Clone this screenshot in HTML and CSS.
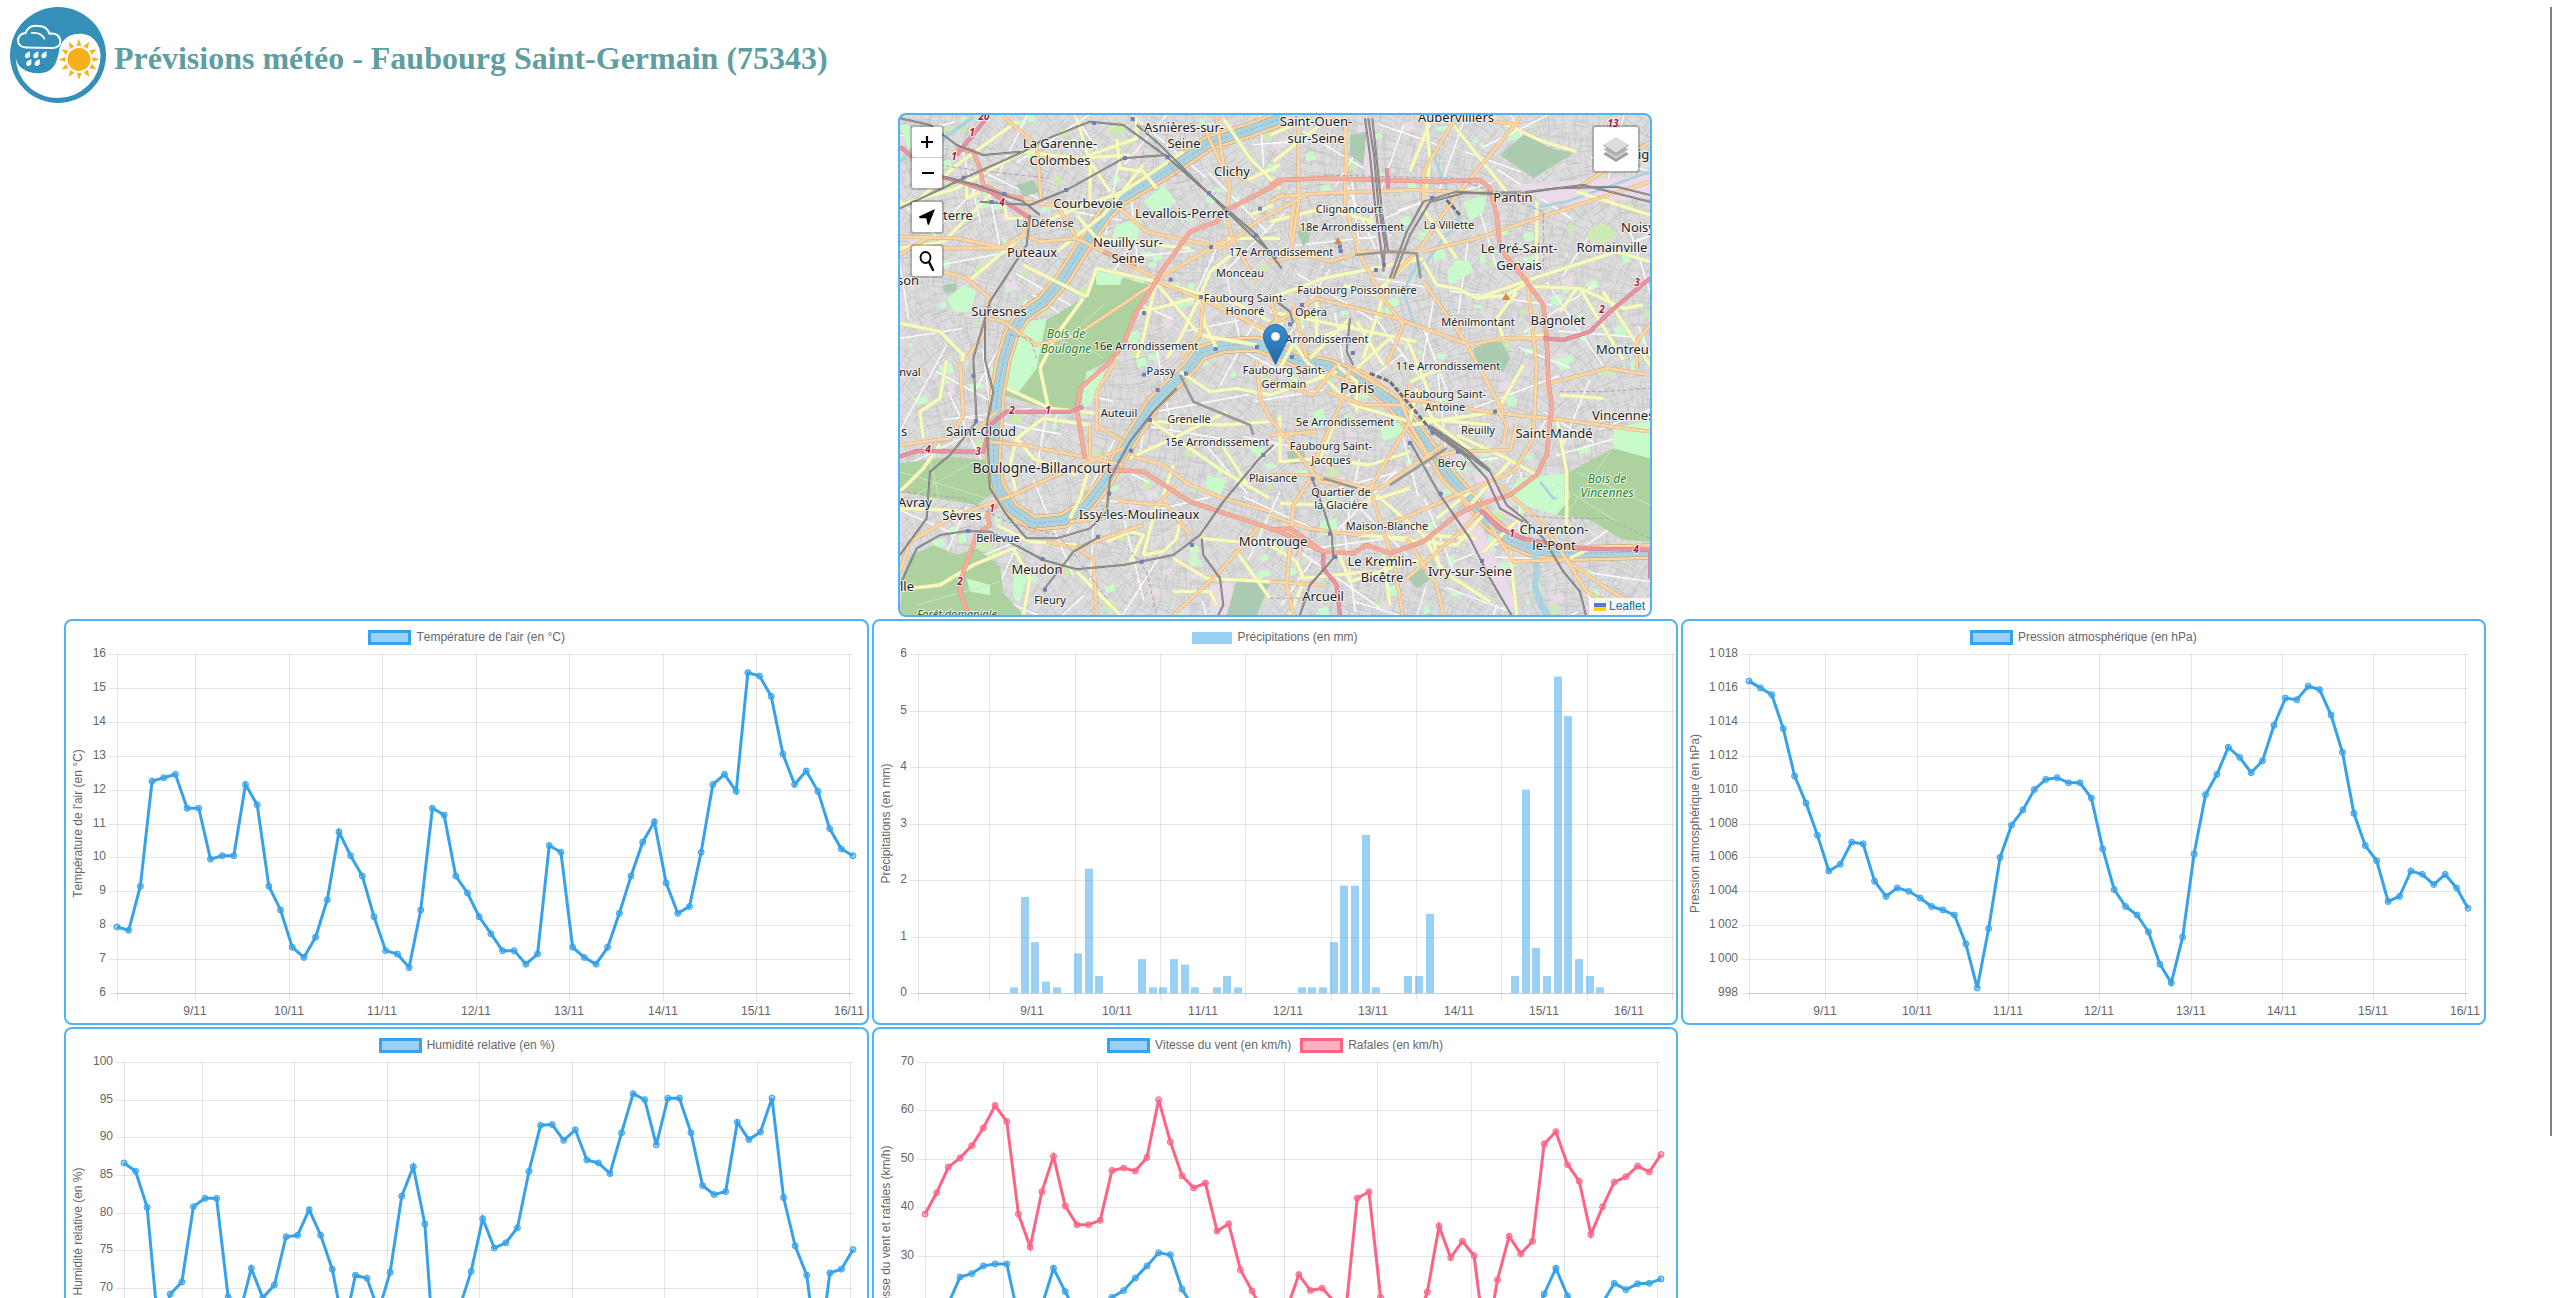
FILE: index.html
```html
<!DOCTYPE html>
<html lang="fr">
<head>
<meta charset="utf-8">
<meta name="viewport" content="width=device-width, initial-scale=1">
<title>Prévisions météo - Faubourg Saint-Germain (75343)</title>
<link rel="stylesheet" href="styles.css">
</head>
<body>
<header class="site-header">
  <svg class="logo" viewBox="20 17 284 284" role="img" aria-label="Logo météo">
    <circle cx="162" cy="159" r="142" fill="#3490b8"/>
    <path d="M37 164C38 192 66 213 103 213C146 212 157 187 164 152C170 116 190 96 227 96C264 96 286 125 288 159A126 126 0 0 1 162 286C92 286 38 232 37 164Z" fill="#fff"/>
    <path d="M68 137C36 137 36 96 66 94C72 78 86 70 103 73C122 72 132 82 137 96C156 93 168 103 169 118C170 130 160 138 147 138Z" fill="#3490b8" stroke="#fff" stroke-width="6"/>
    <path d="M84 94C103 91 116 100 122 111" fill="none" stroke="#fff" stroke-width="5" stroke-linecap="round"/>
    <g fill="#fff">
      <path id="drop" d="M79 148C68 153 62 158 64 164C67 171 77 169 79 162Z"/>
      <use href="#drop" x="25"/><use href="#drop" x="49"/><use href="#drop" x="4" y="23"/><use href="#drop" x="29" y="23"/>
    </g>
    <g fill="#f7b019">
      <circle cx="224" cy="172" r="34"/>
      <path id="ray" d="M224 112L231 132H216Z"/>
      <use href="#ray" transform="rotate(30 224 172)"/><use href="#ray" transform="rotate(60 224 172)"/>
      <use href="#ray" transform="rotate(90 224 172)"/><use href="#ray" transform="rotate(120 224 172)"/>
      <use href="#ray" transform="rotate(150 224 172)"/><use href="#ray" transform="rotate(180 224 172)"/>
      <use href="#ray" transform="rotate(210 224 172)"/><use href="#ray" transform="rotate(240 224 172)"/>
      <use href="#ray" transform="rotate(270 224 172)"/><use href="#ray" transform="rotate(300 224 172)"/>
      <use href="#ray" transform="rotate(330 224 172)"/>
    </g>
  </svg>
  <h1 class="title">Prévisions météo - Faubourg Saint-Germain (75343)</h1>
</header>

<main>
  <section class="map" aria-label="Carte">
    <svg class="map-tiles" id="tiles" viewBox="30 30 2250 1500" preserveAspectRatio="xMidYMid slice" aria-hidden="true"></svg>
    <svg class="map-labels" id="labels" viewBox="0 0 750 500" preserveAspectRatio="xMidYMid slice"></svg>
    <svg class="marker" viewBox="0 0 25 41" role="img" aria-label="Marqueur">
      <defs><linearGradient id="pin" x1="0" y1="0" x2="0" y2="1"><stop offset="0" stop-color="#3a8fd0"/><stop offset="1" stop-color="#2067a5"/></linearGradient></defs>
      <path d="M12.500.5C5.800.5.500 5.900.500 12.500C.500 15.500 1.600 18 2.800 20.500L12.500 40.500L22.200 20.500C23.400 18 24.500 15.500 24.500 12.500C24.500 5.900 19.200.5 12.500.5Z" fill="url(#pin)" stroke="#2a6ea8"/>
      <circle cx="12.500" cy="12.500" r="4.800" fill="#fff" stroke="#2a6ea8" stroke-width=".8"/>
    </svg>
    <div class="controls">
      <div class="bar">
        <button class="tool" type="button" aria-label="Zoom avant"><svg viewBox="0 0 30 30"><path d="M15 9V21M9 15H21" stroke="#000" stroke-width="2.200"/></svg></button>
        <button class="tool" type="button" aria-label="Zoom arrière"><svg viewBox="0 0 30 30"><path d="M10 15H22" stroke="#000" stroke-width="2.200"/></svg></button>
      </div>
      <div class="bar">
        <button class="tool" type="button" aria-label="Me localiser"><svg viewBox="0 0 30 30"><path d="M23 7L7 14.500Q7 16 8.500 16.200L14.200 16.300L15.500 22Q16 23.500 17 22.500Z" fill="#000"/></svg></button>
      </div>
      <div class="bar">
        <button class="tool" type="button" aria-label="Rechercher"><svg viewBox="0 0 30 30" fill="none" stroke="#000"><ellipse cx="13.500" cy="11.500" rx="5" ry="5.500" stroke-width="1.800"/><path d="M17 16L21 24" stroke-width="2.400" stroke-linecap="round"/></svg></button>
      </div>
    </div>
    <div class="bar layers">
      <button class="tool tool-large" type="button" aria-label="Calques"><svg viewBox="0 0 44 44"><path d="M9 27L22 35L35 27L31 24.500H13Z" fill="#a2a2a2"/><path d="M9 22.500L22 31L35 22.500L31 20H13Z" fill="#b5b5b5" stroke="#fff" stroke-width=".8"/><path d="M9 18L22 26.500L35 18L22 10Z" fill="#dcdcdc"/><path d="M9 18L22 26.500L35 18" fill="none" stroke="#8c8c8c" stroke-width=".8"/></svg></button>
    </div>
    <a class="attribution" href="#leaflet"><svg viewBox="0 0 12 8" aria-hidden="true"><path fill="#4c7be1" d="M0 0h12v4H0z"/><path fill="#ffd500" d="M0 4h12v4H0z"/></svg>Leaflet</a>
  </section>

  <section class="charts" id="charts">
    <article class="card" data-chart="temperature"></article>
    <article class="card" data-chart="precipitations"></article>
    <article class="card" data-chart="pression"></article>
    <article class="card" data-chart="humidite"></article>
    <article class="card" data-chart="vent"></article>
  </section>
</main>
<div class="scroll-thumb"></div>
<script src="script.js"></script>
</body>
</html>
```
FILE: styles.css
```css
html {
  height: 100%;
  overflow: hidden;
}
body {
  height: 100%;
  margin: 0;
  overflow-y: auto;
  scrollbar-width: none;
  background: #fff;
  font-family: "Liberation Sans", Arial, sans-serif;
}
.site-header {
  display: flex;
  align-items: center;
  gap: 8px;
  height: 102px;
  padding: 4px 10px 7px;
}
.logo {
  width: 96px;
  height: 96px;
}
.title {
  margin: 0;
  padding-top: 6px;
  color: #5f9ea0;
  font: bold 32px/36px "Liberation Serif", "Times New Roman", serif;
}

/* Map */
.map {
  position: relative;
  width: 750px;
  max-width: calc(100% - 8px);
  height: 500px;
  margin: 0 auto;
  left: -1px;
  border: 2px solid #4fb3f9;
  border-radius: 8px;
  overflow: hidden;
  background: #ddd;
}
.map-tiles,
.map-labels {
  position: absolute;
  inset: 0;
  width: 100%;
  height: 100%;
}
.map-labels {
  font-family: "Noto Sans", sans-serif;
  font-size: 13px;
  text-anchor: middle;
  fill: #222;
  stroke: #fff;
  stroke-opacity: .75;
  stroke-width: 2px;
  stroke-linejoin: round;
  paint-order: stroke;
}
.map-labels .district { font-size: 11px; }
.map-labels .city { font-size: 15px; }
.map-labels .town-large { font-size: 14px; }
.map-labels .park { font-size: 12px; font-style: italic; fill: #1f8424; }
.map-labels .forest { font-size: 11px; font-style: italic; fill: #33502f; }
.map-labels .route { font-size: 10px; font-style: italic; font-weight: bold; fill: #a8193d; }
.map-labels .start { text-anchor: start; }
.marker {
  position: absolute;
  left: calc(50% - 12px);
  top: calc(50% - 41px);
  width: 25px;
  height: 41px;
}
.controls {
  position: absolute;
  left: 10px;
  top: 10px;
  display: grid;
  gap: 10px;
}
.bar {
  display: grid;
  gap: 1px;
  border: 2px solid rgba(0, 0, 0, .2);
  border-radius: 4px;
  background: #ccc;
  background-clip: padding-box;
}
.layers {
  position: absolute;
  right: 10px;
  top: 10px;
}
.tool {
  display: block;
  width: 30px;
  height: 30px;
  padding: 0;
  border: 0;
  border-radius: 2px;
  background: #fff;
  cursor: pointer;
}
.tool svg {
  display: block;
  width: 100%;
  height: 100%;
}
.tool-large {
  width: 44px;
  height: 44px;
}
.attribution {
  position: absolute;
  right: 0;
  bottom: 0;
  display: flex;
  align-items: center;
  gap: 3px;
  padding: 0 5px;
  background: rgba(255, 255, 255, .8);
  color: #0078a8;
  font-size: 12px;
  line-height: 17px;
  text-decoration: none;
}
.attribution svg {
  width: 12px;
  height: 8px;
}

/* Charts */
.charts {
  display: grid;
  grid-template-columns: repeat(3, minmax(0, 1fr));
  gap: 2px 3px;
  padding: 2px 66px 8px 64px;
}
.card {
  box-sizing: border-box;
  height: 406px;
  border: 2px solid #4fb3f9;
  border-radius: 8px;
  background: #fff;
}
.legend {
  display: flex;
  justify-content: center;
  gap: 9px;
  height: 24px;
  margin: 0;
  padding: 5px 0 0;
  list-style: none;
  color: #666;
  font-size: 12px;
  line-height: 22px;
}
.legend li {
  display: flex;
  gap: 5px;
}
.swatch {
  box-sizing: border-box;
  width: 43px;
  height: 15px;
  margin-top: 4px;
  border: 3px solid;
}
.swatch-blue { border-color: #36a2eb; background: #9ad0f5; }
.swatch-pink { border-color: #ff6384; background: #ffb1c1; }
.swatch-bar {
  width: 40px;
  height: 12px;
  margin-top: 6px;
  border: 0;
}
.plot {
  display: block;
  width: 100%;
  height: 373px;
  font-size: 12px;
  font-kerning: none;
}
.legend { font-kerning: none; }
.plot text { fill: #666; }
.plot .grid {
  stroke: #000;
  stroke-opacity: .1;
  shape-rendering: crispEdges;
}
.plot .y-label { text-anchor: end; }
.plot .x-label,
.plot .axis-title { text-anchor: middle; }
.plot .series { fill: none; stroke-width: 3px; stroke-linejoin: miter; }
.plot .blue { stroke: #36a2eb; }
.plot .pink { stroke: #ff6384; }
.plot .dot { fill-opacity: .5; }
.plot .dot.blue { fill: #36a2eb; }
.plot .dot.pink { fill: #ff6384; }
.plot .rain { fill: #36a2eb; fill-opacity: .5; stroke: none; }

.scroll-thumb {
  position: fixed;
  top: 7px;
  right: 0;
  width: 2px;
  height: 87vh;
  background: #808080;
}
```
FILE: script.js
```js
const NS = 'http://www.w3.org/2000/svg';

function add(parent, tag, attrs, text) {
  const node = document.createElementNS(NS, tag);
  for (const key in attrs) node.setAttribute(key, attrs[key]);
  if (text !== undefined) node.textContent = text;
  parent.appendChild(node);
  return node;
}

/* ---------- Charts ---------- */

const DAYS = ['9/11', '10/11', '11/11', '12/11', '13/11', '14/11', '15/11', '16/11'];
const FIRST_DAY = 6.7;

const rain = { 9: .1, 10: 1.7, 11: .9, 12: .2, 13: .1, 15: .7, 16: 2.2, 17: .3, 21: .6, 22: .1, 23: .1, 24: .6, 25: .5, 26: .1, 28: .1, 29: .3, 30: .1, 36: .1, 37: .1, 38: .1, 39: .9, 40: 1.9, 41: 1.9, 42: 2.8, 43: .1, 46: .3, 47: .3, 48: 1.4, 56: .3, 57: 3.6, 58: .8, 59: .3, 60: 5.6, 61: 4.9, 62: .6, 63: .3, 64: .1 };

const charts = {
  temperature: {
    title: "Température de l'air (en °C)", min: 6, max: 16, step: 1, left: 51, right: 14,
    series: [{ name: "Température de l'air (en °C)", color: 'blue', data: [7.95, 7.85, 9.15, 12.25, 12.35, 12.45, 11.45, 11.45, 9.95, 10.05, 10.05, 12.15, 11.55, 9.15, 8.45, 7.35, 7.05, 7.65, 8.75, 10.75, 10.05, 9.45, 8.25, 7.25, 7.15, 6.75, 8.45, 11.45, 11.25, 9.45, 8.95, 8.25, 7.75, 7.25, 7.25, 6.85, 7.15, 10.35, 10.15, 7.35, 7.05, 6.85, 7.35, 8.35, 9.45, 10.45, 11.05, 9.25, 8.35, 8.55, 10.15, 12.15, 12.45, 11.95, 15.45, 15.35, 14.75, 13.05, 12.15, 12.55, 11.95, 10.85, 10.25, 10.05] }]
  },
  precipitations: {
    title: 'Précipitations (en mm)', min: 0, max: 6, step: 1, left: 44, right: 0, slots: 71, bars: rain,
    series: [{ name: 'Précipitations (en mm)', color: 'blue' }]
  },
  pression: {
    title: 'Pression atmosphérique (en hPa)', min: 998, max: 1018, step: 2, left: 66, right: 16,
    series: [{ name: 'Pression atmosphérique (en hPa)', color: 'blue', data: [1016.4, 1016, 1015.6, 1013.6, 1010.8, 1009.2, 1007.3, 1005.2, 1005.6, 1006.9, 1006.8, 1004.6, 1003.7, 1004.2, 1004, 1003.6, 1003.1, 1002.9, 1002.6, 1000.9, 998.3, 1001.8, 1006, 1007.9, 1008.8, 1010, 1010.6, 1010.7, 1010.4, 1010.4, 1009.5, 1006.5, 1004.1, 1003.1, 1002.6, 1001.6, 999.7, 998.6, 1001.3, 1006.2, 1009.7, 1010.9, 1012.5, 1011.9, 1011, 1011.7, 1013.8, 1015.4, 1015.3, 1016.1, 1015.9, 1014.4, 1012.2, 1008.6, 1006.7, 1005.8, 1003.4, 1003.7, 1005.2, 1005, 1004.4, 1005, 1004.2, 1003] }]
  },
  humidite: {
    title: 'Humidité relative (en %)', min: 55, max: 100, step: 5, left: 58, right: 14,
    series: [{ name: 'Humidité relative (en %)', color: 'blue', data: [86.6, 85.5, 80.7, 64, 69.2, 70.8, 80.8, 81.9, 81.9, 68.8, 66.6, 72.6, 68.7, 70.4, 76.8, 77, 80.4, 77, 72.5, 64.5, 71.7, 71.3, 66.9, 72.1, 82.2, 86.1, 78.5, 57, 56, 67.4, 72.2, 79.2, 75.3, 76, 78, 85.5, 91.6, 91.7, 89.6, 91, 87, 86.6, 85.2, 90.6, 95.8, 95, 89, 95.2, 95.2, 90.6, 83.6, 82.4, 82.8, 92, 89.7, 90.7, 95.2, 82, 75.6, 71.7, 60, 72, 72.5, 75.1] }]
  },
  vent: {
    title: 'Vitesse du vent et rafales (km/h)', min: 0, max: 70, step: 10, left: 51, right: 14,
    series: [
      { name: 'Vitesse du vent (en km/h)', color: 'blue', data: [14, 17, 20.1, 25.6, 26.3, 27.9, 28.3, 28.3, 17.2, 14, 19.6, 27.4, 22.6, 18, 17, 18.5, 21.4, 22.8, 25.4, 27.9, 30.6, 30.2, 23.1, 19.2, 18, 15, 15, 12, 10, 9, 9, 10, 10, 10, 10, 10, 10, 18, 19, 10, 9, 9, 10, 11, 16, 14, 15, 14, 8, 12, 16, 14, 16, 22.1, 27.4, 21.7, 18, 15, 20.3, 24.3, 23, 24.2, 24.3, 25.2] },
      { name: 'Rafales (en km/h)', color: 'pink', data: [38.6, 43, 48.3, 50.2, 52.7, 56.4, 61, 57.7, 38.6, 31.8, 43.2, 50.5, 40.3, 36.4, 36.4, 37.3, 47.6, 48.1, 47.5, 50.3, 62.2, 53.5, 46.5, 44, 45, 35.1, 36.6, 27.1, 22.7, 18, 17, 19.2, 26.1, 22.8, 23.3, 20.6, 18, 41.9, 43.2, 21.4, 15, 14, 15.5, 22.5, 36.1, 29.6, 33, 30, 11, 25, 34, 30.4, 33, 53.1, 55.6, 48.8, 45.4, 34.4, 40.1, 45.2, 46.3, 48.5, 47.3, 50.9] }
    ]
  }
};

function drawChart(card) {
  const c = charts[card.dataset.chart];
  card.replaceChildren();

  const legend = document.createElement('ul');
  legend.className = 'legend';
  c.series.forEach(s => {
    const item = document.createElement('li');
    const swatch = document.createElement('span');
    swatch.className = `swatch swatch-${s.color}${c.bars ? ' swatch-bar' : ''}`;
    item.append(swatch, s.name);
    legend.append(item);
  });
  card.append(legend);

  const svg = add(card, 'svg', { class: 'plot', overflow: 'visible', role: 'img', 'aria-label': c.title });
  const top = 4, bottom = 343;
  const left = c.left, right = card.clientWidth - c.right;
  const slots = c.slots || 63;
  const x = i => left + (right - left) * i / slots;
  const y = v => bottom - (bottom - top) * (v - c.min) / (c.max - c.min);
  const line = (x1, y1, x2, y2) => add(svg, 'line', { class: 'grid', x1, y1, x2, y2 });

  for (let v = c.min; v <= c.max; v += c.step) {
    const py = Math.round(y(v)) + .5;
    line(left - 8, py, right, py);
    const label = v >= 1000 ? `1\u202f${String(v).slice(1)}` : String(v);
    add(svg, 'text', { class: 'y-label', x: left - 11, y: Math.round(y(v)) + 3 }, label);
  }
  line(left, bottom + .5, right, bottom + .5);
  line(left + .5, top, left + .5, bottom + 8);
  DAYS.forEach((day, k) => {
    const px = Math.round(x(FIRST_DAY + 8 * k));
    line(px + .5, top, px + .5, bottom + 8);
    const centre = c.bars ? Math.round(x(FIRST_DAY + 8 * k + 4)) : px;
    add(svg, 'text', { class: 'x-label', x: centre, y: 365 }, day);
  });
  if (c.bars) line(right - 3, top, right - 3, bottom + 8);
  add(svg, 'text', { class: 'axis-title', transform: `translate(16 ${(top + bottom) / 2}) rotate(-90)` }, c.title);

  for (const i in c.bars) {
    add(svg, 'rect', { class: 'rain', x: Math.round(x(+i)) - 4, y: y(c.bars[i]), width: 8, height: bottom - y(c.bars[i]) });
  }
  [...c.series].reverse().forEach(s => {
    if (!s.data) return;
    add(svg, 'polyline', { class: `series ${s.color}`, points: s.data.map((v, i) => `${x(i)},${y(v)}`).join(' ') });
    s.data.forEach((v, i) => add(svg, 'circle', { class: `dot ${s.color}`, cx: x(i), cy: y(v), r: 3 }));
  });
}

const drawAll = () => document.querySelectorAll('.card').forEach(drawChart);
drawAll();
addEventListener('resize', drawAll);

/* ---------- Map ---------- */

const tiles = document.getElementById('tiles');
let seed = 7;
const rnd = () => (seed = (seed * 16807) % 2147483647) / 2147483647;
const shape = (fill, d) => add(tiles, 'path', { fill, d });
const stroke = (color, width, d, extra = {}) => add(tiles, 'path', { d, fill: 'none', stroke: color, 'stroke-width': width, 'stroke-linejoin': 'round', ...extra });
const path = pts => 'M' + pts;

// Minor streets: small blocks whose direction drifts slowly across the map
function streets(color, width, cell, count) {
  let d = '';
  for (let cx = 30; cx < 2290; cx += cell) {
    for (let cy = 30; cy < 1540; cy += cell) {
      const a = Math.sin(cx / 310) * 1.1 + Math.cos(cy / 240) * 1.2 + rnd() * .3;
      for (let n = 0; n < count; n++) {
        const b = a + (n % 2) * Math.PI / 2;
        const l = cell * (.35 + rnd() * .35);
        const mx = cx + rnd() * cell, my = cy + rnd() * cell;
        d += `M${Math.round(mx - Math.cos(b) * l)} ${Math.round(my - Math.sin(b) * l)}L${Math.round(mx + Math.cos(b) * l)} ${Math.round(my + Math.sin(b) * l)}`;
      }
    }
  }
  stroke(color, width, d);
}

const G = '#aed1a0', P = '#c8facc', D = '#aacbaf';
streets('#c3c1c3', 1.6, 40, 6);
for (let i = 0; i < 420; i++) {
  const px = 30 + rnd() * 2250, py = 30 + rnd() * 1500, w = 8 + rnd() * 30, h = 8 + rnd() * 22;
  const fill = [P, P, P, '#cdebb0', '#ebdbe8', '#d0d0d0'][Math.floor(rnd() * 6)];
  shape(fill, `M${px} ${py}l${w} ${-h / 3}l${w / 4} ${h}l${-w} ${h / 3}z`);
}
streets('#fff', 4, 230, 2);

[
  ['#ebdbe8', '1400,60 1450,60 1475,250 1510,480 1480,520 1440,300Z M1860,240 2280,210 2280,280 2000,300Z M1750,1110 1800,1100 1860,1200 1900,1250 1850,1240 1790,1180Z M1680,1230 1750,1210 1880,1500 1860,1520Z M960,1440 1030,1430 1020,1530 960,1530Z'],
  [G, '615,500 700,520 780,540 760,590 735,640 690,720 660,765 590,800 570,910 480,915 340,870 350,790 370,690 480,640 580,580Z'],
  [P, '360,660 470,640 440,790 380,870 350,850Z M590,800 650,790 600,900 575,910Z M615,500 700,510 690,540 620,540Z'],
  [G, '2030,1105 2170,1030 2280,1060 2280,1310 2200,1305 2100,1245 2000,1230 1880,1180 1890,1140 1940,1115Z'],
  [P, '1885,1120 2030,1105 2040,1180 2000,1230 1900,1200 1860,1160Z M2170,965 2280,950 2280,1060 2170,1030Z'],
  [G, '30,1075 180,1055 290,1065 310,1165 260,1200 30,1160Z'],
  [G, '60,1355 130,1320 200,1350 260,1330 330,1385 340,1465 400,1530 30,1530 40,1405Z'],
  [P, '230,1420 300,1440 300,1470 240,1460Z M370,1400 410,1420 390,1490 370,1480Z M30,60 70,60 120,160 60,150Z'],
  [D, '1830,150 1900,90 1950,110 1980,130 2050,145 1930,220Z M1380,90 1430,80 1420,180 1380,150Z M1750,730 1830,700 1860,760 1840,800 1760,780Z M1040,1425 1140,1435 1100,1530 1010,1530Z M1550,1415 1590,1380 1620,1425 1580,1450Z M1190,1040 1240,1030 1250,1070 1200,1080Z M1220,380 1250,370 1260,400 1240,425Z M380,240 430,225 450,260 400,275Z M160,540 200,535 200,560 160,560Z'],
  [P, '1670,500 1700,465 1740,470 1750,500 1680,540Z M1720,290 1790,270 1780,320 1740,350Z M170,580 220,540 260,560 240,620 190,620Z M1270,920 1300,910 1310,960 1270,970Z M1470,970 1540,950 1550,980 1480,1010Z M680,360 750,340 740,420 660,420Z M760,290 820,240 860,290 800,330Z M950,1110 1010,1125 990,1170 950,1150Z M1290,1250 1340,1240 1340,1290 1290,1290Z'],
  ['#cdebb0', '2100,370 2140,355 2180,385 2140,420 2090,400Z M560,560 590,540 600,560 570,580Z']
].forEach(([fill, d]) => shape(fill, path(d)));

// Park alleys
stroke('#c8e6bd', 3, 'M30 1100L290 1180M60 1180L250 1070M120 1065L150 1190M1990 1130L2180 1250M2020 1240L2160 1040M2060 1100L2280 1200M80 1500L330 1430M500 660L640 760M420 800L640 600');

// Water
const seine = path('1180,38 1080,75 1000,100 960,112 870,172 780,228 690,282 650,322 610,380 570,440 520,520 460,590 400,632 365,685 340,765 322,865 315,965 310,1065 322,1145 365,1212 430,1255 520,1247 590,1203 642,1135 690,1055 740,975 790,895 840,845 900,785 930,745 1000,722 1100,717 1150,735 1220,765 1310,782 1410,818 1510,895 1570,965 1620,1035 1680,1115 1740,1185 1790,1245 1860,1305 1930,1335 2050,1345 2280,1340');
stroke('#c99b66', 49, seine);
stroke('#fcd6a4', 46, seine);
stroke('#c99b66', 31, seine);
stroke('#aad3df', 28, seine);
stroke('#8ca6c0', 2, seine, { 'stroke-dasharray': '10 6' });
stroke('#aad3df', 20, path('1935,1345 1940,1400 1935,1445 1955,1505 1980,1540'));
stroke('#aad3df', 12, path('30,170 80,120 150,110 250,35'));
stroke('#aad3df', 8, path('1580,515 1660,400 1710,350 1630,150 1610,90M1590,460 1540,560 1580,680M1920,310 2030,290 2280,200M1950,1130 1990,1180 2000,1180'));

function roads(fill, casing, width, list) {
  list.forEach(d => stroke(casing, width + 2, path(d)));
  list.forEach(d => stroke(fill, width, path(d)));
}

roads('#f7fabf', '#d6d69c', 10, [
  '90,280 200,180 380,50', '30,300 200,250 400,140 560,160 720,150', '560,40 600,170 600,290', '600,170 660,260', '440,360 560,310 700,260 880,140', '500,440 640,330 760,180', '680,100 690,190 760,200 800,250',
  '740,40 740,100 600,150', '230,220 230,280 270,260', '340,270 350,340 410,340', '560,330 620,400 900,430', '30,430 160,410 320,250', '240,525 400,390', '30,655 150,680 220,750 215,770', '400,480 520,540 590,575',
  '590,575 620,490 800,530', '800,520 1020,400 1170,400', '800,530 1050,600 1140,650', '800,535 930,690 1100,720', '930,575 800,610 740,620', '930,575 870,700 830,760', '930,575 945,660 980,730', '800,520 760,700 740,760', '930,575 960,500 1050,430', '930,575 1060,640 1150,700',
  '450,790 500,690 580,580', '1000,40 1080,160 1170,250', '1170,180 1060,230', '1080,330 1150,300', '1140,90 1260,40', '1150,170 1290,60', '1610,50 1620,170 1600,300', '1620,50 1560,200', '1690,60 1850,260', '1830,50 1960,110 2060,140', '2060,260 2280,330', '1940,290 1940,490',
  '1140,350 1300,310 1450,350', '1600,310 1640,370 1700,460', '1140,580 1300,520 1600,460', '1360,540 1450,570 1580,450', '1600,470 1640,540 1700,550 1760,580 1930,520 2180,440 2280,470', '1760,580 1850,570 1920,530', '1930,545 2070,550 2200,610 2260,600', '2060,550 2010,620', '2070,550 2200,765',
  '1140,620 1390,670 1580,710', '1160,640 1250,770', '1280,590 1280,700 1390,660', '1400,650 1480,780', '1490,540 1420,760', '1500,700 1400,790', '1380,640 1260,760', '1780,710 1960,690', '1550,700 1620,870', '1840,700 1820,640 1880,560', '2140,560 2280,780', '1240,660 1170,790', '1250,770 1390,900 1560,950',
  '350,850 480,910 620,925', '380,1000 460,940 600,960', '380,1000 430,1060 560,1110', '600,1080 570,1180 540,1240', '380,1000 360,1080 380,1170', '450,790 480,930', '30,1160 100,1090 150,1020', '30,1210 170,1215 290,1230', '170,765 150,880 90,920 100,1000', '320,1260 420,1310 560,1320', '370,1330 250,1380 150,1440 60,1450', '370,1330 420,1420 400,1530',
  '800,950 1000,960 1140,950', '780,945 900,1030 1000,1100 1140,1180', '720,1060 850,1000 1010,920', '870,800 960,860 1040,850 1140,870', '820,1170 850,1080', '990,1010 1080,1150', '800,1200 760,1350', '720,1370 760,1290 720,1280 650,1310', '850,1360 950,1420 1140,1430', '930,1300 1040,1310 1140,1310', '760,1350 820,1340 860,1300 870,1250', '1040,1340 1140,1480', '850,1460 960,1460 980,1500', '560,1400 700,1540',
  '1170,930 1170,1070 1290,1060 1440,1080', '1170,1195 1290,1200 1400,1200 1560,1150', '1290,1060 1340,940', '1440,1080 1560,1040', '1140,870 1260,830 1340,800', '1340,780 1400,830 1400,920', '1560,960 1820,920 1900,780', '1580,850 1560,950', '1560,830 1700,770', '1590,940 1800,960', '1700,990 1850,1060 1940,1110', '1740,1200 1860,1070', '1640,1240 1740,1160', '1580,860 1640,960 1750,1040', '2010,870 2140,880', '2000,940 2030,1100 2030,1280',
  '1460,1170 1530,1230 1600,1290 1760,1300', '1600,1290 1660,1400 1800,1490', '1630,1300 1650,1400', '1500,1300 1700,1320 1780,1230', '1780,1340 1900,1230', '1860,1340 1880,1530', '1140,1320 1220,1370 1240,1420 1430,1400', '1240,1430 1200,1530', '1340,1330 1380,1430 1500,1390 1600,1360', '1480,1350 1500,1500', '2040,1360 2100,1330', '1400,1290 1560,1300'
]);
roads('#fcd6a4', '#cfa36f', 9, [
  '340,35 440,120 455,300', '30,395 200,400 400,440', '30,450 110,400', '150,430 330,430 400,390', '160,500 230,520 300,580 280,690 230,760', '400,290 500,300 560,400', '410,310 400,390 450,410 560,400 800,520', '690,310 770,380 1000,430 1100,350 1250,270',
  '800,530 930,580 1140,680', '560,690 440,720 340,650 300,640', '560,690 800,530', '800,525 1010,400', '940,580 930,690 870,760', '980,40 1000,180 1070,230', '940,60 1020,240 1010,330 1030,410 1100,530', '1365,40 1370,200', '1370,40 1365,300 1410,450', '1225,60 1225,300 1200,450',
  '1690,50 1600,200 1600,300', '1740,40 1890,60', '1890,40 1700,270 1590,430 1500,520', '2060,250 2280,110', '1600,210 1600,300', '1160,275 1300,265 1570,255 1800,265', '1140,290 1180,270', '1600,440 1760,400 1940,340 2280,230', '1140,470 1250,450 1320,470 1420,440 1590,440', '1140,660 1180,640 1280,580 1520,640 1740,720', '1600,530 1720,700 1840,920', '1410,450 1480,580 1540,660', '1540,660 1490,780', '1740,720 1840,700 1960,700', '1210,600 1250,760', '1140,580 1160,640 1140,670', '1860,460 1910,520 1920,600 1940,780 1930,1000 1870,1100 1700,1170 1540,1240 1400,1290 1250,1270 1140,1230', '1960,840 2150,790 2280,810', '1200,400 1210,300', '2280,660 2240,710 2240,790',
  '210,770 220,930 180,1000 30,1020', '230,1000 320,920', '300,1010 400,1020 600,1060 700,1080', '370,1170 500,1110 700,1030', '30,1400 60,1310 180,1240 370,1170', '620,980 620,860 680,765', '620,960 700,1010', '600,1060 600,960', '730,1055 820,1080 900,1140 1000,1180 1140,1220', '680,1180 700,1190 830,1200 900,1290', '540,1250 640,1240 660,1160', '470,1310 560,1330 640,1300 760,1260', '560,1330 610,1360 620,1530', '800,1200 860,1140', '1110,1260 980,1410 850,1530', '1100,765 1110,880 1140,940',
  '1140,940 1290,1130 1470,1150', '1140,990 1280,980', '1140,1110 1260,1110 1440,1150', '1440,1150 1560,950', '1440,1150 1480,1280 1510,1360 1540,1540', '1470,1150 1660,1020', '1270,1110 1210,1200 1190,1440 1210,1530', '1380,790 1350,900 1260,1100', '1380,790 1530,880 1560,960 1660,1130 1740,1200', '1340,780 1270,870 1140,830', '1540,880 1820,925 1980,940 2280,980', '1560,840 1540,900 1420,900 1310,860', '1600,1060 1700,1040 1860,1035 1880,960', '1830,1140 1960,1260 2020,1350 2090,1460 2200,1520', '1800,1260 1870,1370 2020,1365', '2020,1360 2150,1450 2280,1530', '1820,910 1850,960 1840,1020', '1540,1430 1700,1290 1790,1200', '1550,1300 1640,1440 1660,1530', '1230,1300 1230,1350', '1300,1440 1140,1430'
]);
roads('#f5ac9a', '#d98672', 11, [
  '1175,230 1060,290 1000,320 980,350 900,380 850,450 820,490 780,560 740,620 700,720 650,780 570,850 560,910 575,1000 585,1060', '1140,240 1170,225 1300,220 1480,225 1640,230 1770,225 1800,250 1820,330 1830,430 1910,530 1960,600 1970,700 1975,830 1985,900 1970,1050 1940,1110 1860,1170 1760,1200 1700,1230 1600,1310 1500,1345 1430,1320 1390,1345 1300,1340 1200,1270 1140,1275', '660,1095 760,1100 900,1190 1170,1280 1300,1340', '200,130 250,140 270,190 280,240 340,270 400,280', '640,440 740,480', '320,1200 290,1230 300,1260 260,1290 220,1400 210,1460 235,1530'
]);
roads('#e892a2', '#d06a82', 10, [
  '1960,700 2020,705 2100,680 2160,620 2280,520', '30,125 60,150 130,210 210,230 300,260 420,340', '200,150 240,100 290,40', '30,1055 80,1038 280,1040 300,960 350,920 540,920 580,905', '1770,1215 1830,1270 1900,1300 2050,1330 2280,1335 2280,1420', '1300,1345 1300,1390 1340,1440 1350,1530', '1490,190 1495,250'
]);

// Railways
[
  '30,40 120,60 200,120 280,150 400,140 450,110 600,50 700,60 830,155 950,260 1100,390 1175,490',
  '740,60 800,110 880,190 980,290 1090,395 1160,460', '30,310 220,220 400,140', '270,290 420,300 530,255 700,160 830,150',
  '160,215 260,240 400,290 450,330', '420,330 410,420 300,590 250,760 260,950 180,1050 120,1100 110,1240 30,1350', '285,620 285,765 310,860 290,960 300,1150 350,1230 410,1300 500,1300 600,1270 650,1220 660,1120 720,1010 790,920 860,850',
  '1425,40 1440,150 1455,300 1480,480', '1435,40 1452,150 1465,300 1485,420 1480,500', '1447,40 1464,200 1477,330 1495,440', '1500,520 1550,380 1600,290 1700,260 1860,270 2000,250 2180,245 2280,270', '1510,520 1560,390 1620,290 1720,265 1900,262 2080,240 2280,290',
  '30,1440 80,1330 150,1290 230,1278 300,1280 460,1365 560,1393 700,1380 850,1350 930,1290 1000,1190 1100,1070 1150,1020', '935,1300 940,1350 990,1420 1000,1500 980,1540', '460,1455 520,1380 550,1340 620,1300',
  '1610,960 1720,1040 1800,1100 1850,1200 1900,1240 1960,1300 2020,1400 2070,1460 2090,1540', '1620,975 1730,1055 1790,1120 1830,1210 1900,1250', '1625,965 1735,1040 1800,1095', '1560,1010 1650,1170 1740,1300 1800,1420 1870,1540', '1268,1125 1300,1210 1325,1290 1330,1360 1260,1440 1230,1530', '1160,590 1200,620 1210,655', '1380,640 1370,740 1390,780'
].forEach(d => { stroke('#707070', 6, path(d)); stroke('#c4c4c4', 1.6, path(d)); });

stroke('#999', 8, path('1395,450 1500,440 1580,445 1592,520M870,810 910,890 1080,960 1090,990M1500,1140 1670,1030M1300,1120 1400,1150'));
stroke('#707070', 9, path('1440,805 1500,830 1560,900 1610,960M1670,285 1710,330'), { 'stroke-dasharray': '16 6' });
stroke('#b79bb9', 3, path('60,60 140,180 300,200 480,220M360,690 420,700 440,760M650,1480 540,1330 500,1290 350,1250 220,1180 30,1160M760,60 840,180 860,210M1300,210 1700,220 1960,320 1960,480M2010,860 2150,860 2280,850M1900,1230 2010,1240 2150,1240 2280,1300M700,1310 770,1400 800,1530M1140,1480 1250,1480'), { 'stroke-dasharray': '12 7' });

[[612,54],[728,42],[705,159],[834,156],[957,264],[1110,311],[1098,392],[963,426],[842,524],[933,576],[762,624],[528,255],[343,267],[305,291],[221,218],[977,732],[1101,726],[1206,756],[1389,744],[1200,658],[1236,600],[1350,425],[1352,438],[1458,495],[1482,480],[1626,279],[250,812],[258,948],[762,809],[803,855],[888,806],[780,945],[723,1037],[657,1166],[624,1296],[234,1278],[458,1362],[755,1370],[465,1454],[906,1320],[1120,1050],[1268,1121],[1320,1286],[1335,1356],[1560,1014],[1619,967],[1704,1040],[1652,1166],[1776,1368],[1815,920],[1628,983]]
  .forEach(([sx, sy]) => add(tiles, 'rect', { x: sx - 6, y: sy - 6, width: 12, height: 12, fill: '#757fb3' }));
shape('#cf8f4d', 'M1331 418l13-22l13 22zM1835 585l13-22l13 22z');

// Place names, in tile units (three per label pixel, with a margin of 30)
const names = {
  town: [['Asnières-sur-',882,80],['Seine',882,130],['La Garenne-',511,129],['Colombes',511,180],['Clichy',1027,213],['Courbevoie',595,308],['Levallois-Perret',876,338],['terre',205,346],['Neuilly-sur-',713,425],['Seine',713,475],['Puteaux',427,456],['son',55,541],['Suresnes',328,633],['Saint-Ouen-',1277,63],['sur-Seine',1278,113],['Aubervilliers',1697,51],['Pantin',1870,292],['Le Pré-Saint-',1888,445],['Gervais',1887,496],['Romainville',2166,441],['Bagnolet',2004,660],['s',42,992],['Saint-Cloud',273,993],['Avray',75,1205],['Sèvres',215,1246],['Issy-les-Moulineaux',746,1242],['Montrouge',1148,1324],['Meudon',442,1406],['lle',52,1459],['Saint-Mandé',1992,1000],['Charenton-',1992,1287],['le-Pont',1992,1336],['Le Kremlin-',1477,1382],['Bicêtre',1477,1431],['Ivry-sur-Seine',1740,1412],['Arcueil',1299,1487]],
  'town start': [['Noisy',2194,382],['Montreu',2118,746],['ig',2245,163],['Vincennes',2105,944]],
  city: [['Paris',1402,864]],
  'town-large': [['Boulogne-Billancourt',456,1103]],
  district: [['La Défense',465,365],['17e Arrondissement',1174,454],['Monceau',1049,515],['Faubourg Saint-',1065,590],['Honoré',1066,631],['16e Arrondissement',767,734],['Clignancourt',1377,324],['18e Arrondissement',1386,377],['La Villette',1678,371],['Faubourg Poissonnière',1401,566],['Opéra',1263,634],['Ménilmontant',1764,662],['Arrondissement',1310,715],['11e Arrondissement',1675,796],['nval',60,812],['Passy',812,810],['Auteuil',688,937],['Grenelle',897,955],['15e Arrondissement',982,1023],['Bellevue',324,1311],['Plaisance',1148,1130],['Fleury',480,1498],['Faubourg Saint-',1183,806],['Germain',1182,848],['Faubourg Saint-',1665,878],['Antoine',1665,919],['5e Arrondissement',1366,962],['Reuilly',1764,986],['Faubourg Saint-',1324,1034],['Jacques',1324,1076],['Bercy',1685,1085],['Quartier de',1353,1173],['la Glacière',1354,1213],['Maison-Blanche',1492,1276]],
  park: [['Bois de',527,700],['Boulogne',527,745],['Bois de',2152,1134],['Vincennes',2151,1177]],
  forest: [['Forêt domaniale',200,1540]],
  route: [['20',282,46],['1',247,93],['1',193,164],['4',335,302],['13',2168,66],['2',2136,625],['3',2242,544],['2',367,928],['1',475,928],['4',115,1044],['3',263,1051],['1',307,1221],['2',211,1440],['1',1865,1295],['4',2238,1345]]
};
const labels = document.getElementById('labels');
for (const kind in names) {
  names[kind].forEach(([text, tx, ty]) => add(labels, 'text', { class: kind, x: Math.round((tx - 30) / 3), y: Math.round((ty - 30) / 3) }, text));
}
```
